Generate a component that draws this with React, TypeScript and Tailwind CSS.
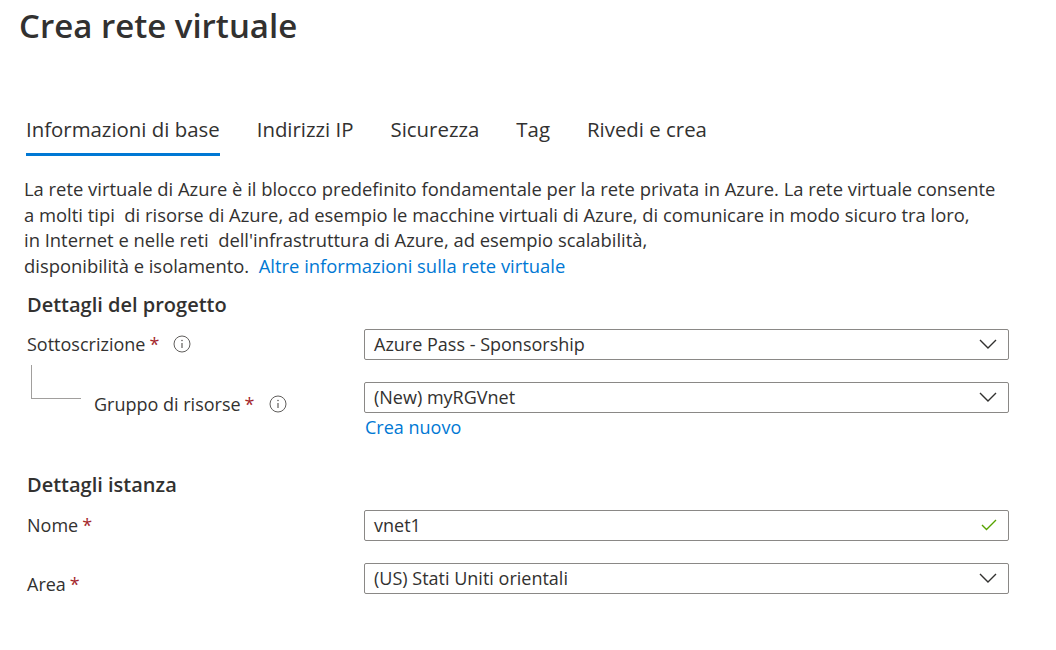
import React from 'react';

const Star = () => <span className="text-[#a4262c] ml-1">*</span>;

const Info = () => (
  <svg width="18" height="18" viewBox="0 0 18 18" className="text-[#605e5c]">
    <circle cx="9" cy="9" r="8" fill="none" stroke="currentColor" strokeWidth="1" />
    <line x1="9" y1="8" x2="9" y2="13" stroke="currentColor" strokeWidth="1.2" />
    <circle cx="9" cy="5.5" r="0.8" fill="currentColor" />
  </svg>
);

const Chevron = () => (
  <svg width="18" height="10" viewBox="0 0 18 10" className="text-[#323130]">
    <path d="M1 1 L9 9 L17 1" fill="none" stroke="currentColor" strokeWidth="1.4" />
  </svg>
);

const Check = () => (
  <svg width="16" height="12" viewBox="0 0 16 12" className="text-[#57a300]">
    <path d="M1 6 L5.5 10.5 L15 1" fill="none" stroke="currentColor" strokeWidth="1.4" />
  </svg>
);

const Field: React.FC<{ value: string; check?: boolean }> = ({ value, check }) => (
  <div className="w-[645px] h-[31px] border border-[#8a8886] rounded-[2px] flex items-center justify-between pl-[9px] pr-[11px]">
    <span className="pt-[1px]">{value}</span>
    {check ? <Check /> : <Chevron />}
  </div>
);

export default function App() {
  const tabs = ['Informazioni di base', 'Indirizzi IP', 'Sicurezza', 'Tag', 'Rivedi e crea'];
  return (
    <div className="w-[1056px] h-[650px] bg-white text-[#323130] font-['Open_Sans','Liberation_Sans',sans-serif] text-[18px] overflow-hidden">
      <h1 className="pl-[19px] pt-[2px] text-[33px] leading-[48px] font-semibold">Crea rete virtuale</h1>

      <div className="flex gap-[37px] pl-[26px] mt-[64px] text-[20.4px]">
        {tabs.map((t, i) => (
          <div key={t} className="flex flex-col">
            <span className="leading-[30px]">{t}</span>
            <div className={i === 0 ? 'h-[3px] bg-[#0078d4] mt-[9px]' : 'h-[3px] mt-[9px]'} />
          </div>
        ))}
      </div>

      <p className="pl-[24px] mt-[20px] leading-[25.7px] text-[18.4px]">
        La rete virtuale di Azure è il blocco predefinito fondamentale per la rete privata in Azure. La rete virtuale consente
        <br />a molti tipi&nbsp; di risorse di Azure, ad esempio le macchine virtuali di Azure, di comunicare in modo sicuro tra loro,
        <br />in Internet e nelle reti&nbsp; dell'infrastruttura di Azure, ad esempio scalabilità,
        <br />disponibilità e isolamento.&nbsp; <span className="text-[#0078d4]">Altre informazioni sulla rete virtuale</span>
      </p>

      <div className="pl-[27px] mt-[12px]">
        <h2 className="font-semibold text-[20px] leading-[28px]">Dettagli del progetto</h2>

        <div className="flex items-center mt-[10px] h-[31px]">
          <div className="w-[337px] flex items-center gap-[14px]">
            <span>Sottoscrizione<Star /></span>
            <Info />
          </div>
          <Field value="Azure Pass - Sponsorship" />
        </div>

        <div className="flex mt-[22px]">
          <div className="w-[337px] flex items-start">
            <div className="w-[50px] h-[34px] ml-[4px] -mt-[17px] border-l border-b border-[#a19f9d]" />
            <div className="flex items-center gap-[14px] ml-[13px] h-[31px] mt-[7px]">
              <span>Gruppo di risorse<Star /></span>
              <Info />
            </div>
          </div>
          <div className="flex flex-col">
            <Field value="(New) myRGVnet" />
            <span className="text-[#0078d4] pl-[1px] leading-[28px]">Crea nuovo</span>
          </div>
        </div>

        <h2 className="font-semibold text-[20px] leading-[28px] mt-[30px]">Dettagli istanza</h2>

        <div className="flex items-center mt-[11px] h-[31px]">
          <div className="w-[337px]">
            <span>Nome<Star /></span>
          </div>
          <Field value="vnet1" check />
        </div>

        <div className="flex items-center mt-[22px] h-[31px]">
          <div className="w-[337px] pt-[12px]">
            <span>Area<Star /></span>
          </div>
          <Field value="(US) Stati Uniti orientali" />
        </div>
      </div>
    </div>
  );
}
